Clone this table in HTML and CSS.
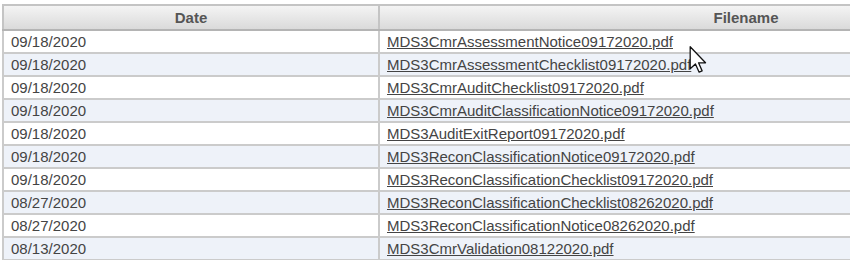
FILE: index.html
```html
<!DOCTYPE html>
<html>
<head>
<meta charset="utf-8">
<link rel="stylesheet" href="styles.css">
</head>
<body>
<div class="wrap">
<table class="grid">
  <thead>
    <tr><th class="c-date">Date</th><th class="c-file">Filename</th></tr>
  </thead>
  <tbody>
    <tr><td>09/18/2020</td><td><a href="#">MDS3CmrAssessmentNotice09172020.pdf</a></td></tr>
    <tr class="alt"><td>09/18/2020</td><td><a href="#">MDS3CmrAssessmentChecklist09172020.pdf</a></td></tr>
    <tr><td>09/18/2020</td><td><a href="#">MDS3CmrAuditChecklist09172020.pdf</a></td></tr>
    <tr class="alt"><td>09/18/2020</td><td><a href="#">MDS3CmrAuditClassificationNotice09172020.pdf</a></td></tr>
    <tr><td>09/18/2020</td><td><a href="#">MDS3AuditExitReport09172020.pdf</a></td></tr>
    <tr class="alt"><td>09/18/2020</td><td><a href="#">MDS3ReconClassificationNotice09172020.pdf</a></td></tr>
    <tr><td>09/18/2020</td><td><a href="#">MDS3ReconClassificationChecklist09172020.pdf</a></td></tr>
    <tr class="alt"><td>08/27/2020</td><td><a href="#">MDS3ReconClassificationChecklist08262020.pdf</a></td></tr>
    <tr><td>08/27/2020</td><td><a href="#">MDS3ReconClassificationNotice08262020.pdf</a></td></tr>
    <tr class="alt"><td>08/13/2020</td><td><a href="#">MDS3CmrValidation08122020.pdf</a></td></tr>
  </tbody>
</table>
<svg class="cursor" width="18" height="27" viewBox="0 0 12 19">
  <path d="M0.5,0.5 L0.5,16 L4.2,12.6 L6.8,18.4 L8.9,17.5 L6.4,11.8 L11.3,11.8 Z" fill="#fff" stroke="#111" stroke-width="0.9" stroke-linejoin="round"/>
</svg>
</div>
</body>
</html>
```
FILE: styles.css
```css
html, body {
  margin: 0;
  padding: 0;
  background: #ffffff;
  overflow: hidden;
}
.wrap {
  position: relative;
  width: 850px;
  height: 260px;
  overflow: hidden;
  padding: 4px 0 0 2px;
  box-sizing: border-box;
}
.grid {
  border-collapse: collapse;
  width: 1112px;
  table-layout: fixed;
  font-family: "Liberation Sans", Arial, sans-serif;
  font-size: 15px;
  color: #444444;
}
.c-date { width: 374px; }
.grid th {
  height: 23px;
  padding: 0;
  font-weight: bold;
  color: #555555;
  text-align: center;
  background: linear-gradient(#f4f4f4, #dadada);
  border: 2px solid #c4c4c4;
  border-bottom-color: #b4b4b4;
}
.grid td {
  height: 21px;
  padding: 1px 0 0 7px;
  border: 2px solid #cbcbcb;
  white-space: nowrap;
  line-height: 20px;
  box-sizing: border-box;
}
.grid tbody tr { background: #ffffff; }
.grid tbody tr.alt { background: #eef2f9; }
.grid a {
  color: #444444;
  text-decoration: underline;
}
.cursor {
  position: absolute;
  left: 689px;
  top: 46px;
}
```
